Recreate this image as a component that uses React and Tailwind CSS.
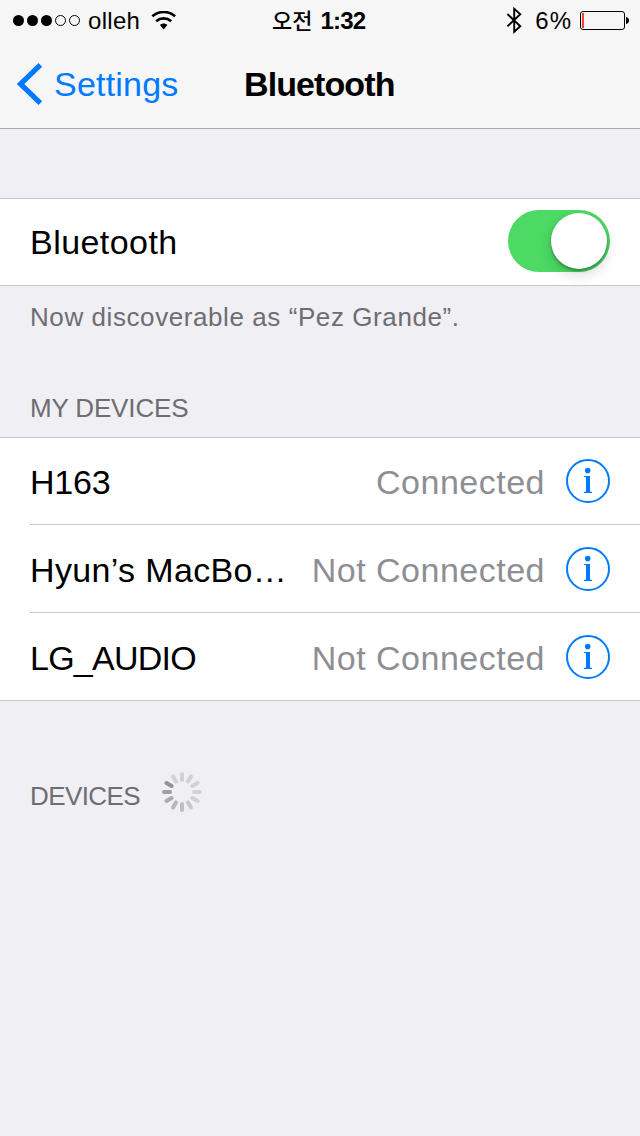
import clsx from "clsx";

const devices = [
  { name: "H163", status: "Connected", tracking: "tracking-[-0.2px]" },
  { name: "Hyun’s MacBo…", status: "Not Connected", tracking: "tracking-[0.35px]" },
  { name: "LG_AUDIO", status: "Not Connected", tracking: "tracking-[-0.75px]" },
];

// clockwise from 12 o'clock
const spinnerBlades = [
  "#d2d2d6", "#d2d2d6", "#d2d2d6", "#d2d2d6", "#d2d2d6", "#c8c8cc",
  "#bebec2", "#b6b6ba", "#acacb0", "#a0a0a4", "#929297", "#d2d2d6",
];

function SignalDots() {
  return (
    <svg width="70" height="12" viewBox="0 0 70 12" className="shrink-0">
      {[0, 1, 2, 3, 4].map((i) => (
        <circle key={i} cx={6.5 + i * 14} cy="6.5" r={i < 3 ? 5.5 : 5} fill={i < 3 ? "#000" : "none"} stroke={i < 3 ? "none" : "#000"} />
      ))}
    </svg>
  );
}

function WifiIcon() {
  return (
    <svg width="26" height="19" viewBox="0 0 26 19" className="ml-[11px] shrink-0">
      <g fill="none" stroke="#000" strokeWidth="2.7">
        <path d="M1.3 5.2C8 -.4 17.4 -.4 24.1 5.2" />
        <path d="M5.2 10.2C9.6 6.5 15.8 6.5 20.2 10.2" />
      </g>
      <path d="M9 14C11.2 12 14.2 12 16.4 14L12.7 18.4Z" />
    </svg>
  );
}

function BluetoothIcon() {
  return (
    <svg width="16" height="28" viewBox="0 0 16 28" className="shrink-0" fill="none" stroke="#000" strokeWidth="1.9">
      <path d="M1.4 8L14.3 20.2L8.2 25.8V2.8L14.3 8.2L1.4 20.4" />
    </svg>
  );
}

function BatteryIcon() {
  return (
    <svg width="50" height="20" viewBox="0 0 50 20" className="shrink-0">
      <rect x=".5" y=".5" width="44" height="18" rx="2.5" fill="none" stroke="#000" />
      <rect x="2" y="2" width="2" height="15" fill="#ff3b30" />
      <path d="M46 6C48.2 6.4 49 7.8 49 9.5C49 11.2 48.2 12.6 46 13Z" />
    </svg>
  );
}

function InfoIcon() {
  return (
    <svg width="44" height="44" viewBox="0 0 44 44" className="shrink-0">
      <circle cx="22" cy="22" r="21" fill="none" stroke="#007aff" strokeWidth="2" />
      <circle cx="21.7" cy="11.6" r="2.8" fill="#007aff" />
      <path d="M17.8 17H24V32.6L26 33V34H17.8V33L20 32.6V18.3L17.8 18Z" fill="#007aff" />
    </svg>
  );
}

function Spinner() {
  return (
    <svg width="40" height="40" viewBox="0 0 40 40" className="shrink-0">
      {spinnerBlades.map((color, i) => (
        <rect key={i} x="18" y="0" width="4" height="10" rx="2" fill={color} transform={`rotate(${i * 30} 20 20)`} />
      ))}
    </svg>
  );
}

function StatusBar() {
  return (
    <div className="grid h-10 grid-cols-[260px_1fr_auto] items-center pl-3 pr-[10px] text-[24px] leading-10">
      <div className="flex h-10 items-center">
        <SignalDots />
        <span className="ml-1.5 mt-0.5 tracking-[0.3px]">olleh</span>
        <WifiIcon />
      </div>
      <div className="flex h-10 items-center">
        <span className="-mt-0.5 font-['Noto_Sans_CJK_KR',sans-serif] text-[22px] font-medium">오전</span>
        <span className="ml-2 mt-0.5 font-bold tracking-[-0.8px]">1:32</span>
      </div>
      <div className="flex h-10 items-center">
        <BluetoothIcon />
        <span className="ml-[13px] mt-0.5 tracking-[1px]">6%</span>
        <span className="ml-2 mt-0.5"><BatteryIcon /></span>
      </div>
    </div>
  );
}

function NavBar() {
  return (
    <div className="grid h-[88px] grid-cols-[228px_1fr] items-center pl-4">
      <button className="flex items-center text-[#007aff] tracking-[0.2px]">
        <svg width="27" height="44" viewBox="0 0 27 44" className="shrink-0" fill="currentColor">
          <path d="M22.5 1L26.2 4.7L8.3 22L26.2 39.3L22.5 43L.8 22Z" />
        </svg>
        <span className="ml-[11px]">Settings</span>
      </button>
      <h1 className="font-bold tracking-[-0.9px]">Bluetooth</h1>
    </div>
  );
}

export default function App() {
  return (
    <div className="h-[1136px] w-[640px] overflow-hidden bg-[#efeff4] font-['Liberation_Sans','Noto_Sans_CJK_KR',sans-serif] text-[34px] leading-[40px] text-black">
      <header className="h-[129px] border-b border-[#a7a7aa] bg-[#f6f6f6]">
        <StatusBar />
        <NavBar />
      </header>

      <section className="mt-[69px] flex h-[88px] items-center justify-between border-y border-[#c8c7cc] bg-white pl-[30px] pr-[30px]">
        <span className="tracking-[0.45px]">Bluetooth</span>
        <div className="-mt-0.5 flex h-[62px] w-[102px] items-center justify-end rounded-full bg-[#4cd964] pr-[3px]">
          <div className="size-14 rounded-full bg-white shadow-[0_6px_14px_rgba(0,0,0,0.15),0_2px_3px_rgba(0,0,0,0.3)]" />
        </div>
      </section>
      <p className="mt-[11px] pl-[30px] text-[26px] tracking-[0.58px] text-[#6d6d72]">Now discoverable as “Pez Grande”.</p>

      <h2 className="mt-[51px] pl-[30px] text-[26px] tracking-[-0.15px] text-[#6d6d72]">MY DEVICES</h2>
      <ul className="mt-[9px] border-y border-[#c8c7cc] bg-white pl-[30px]">
        {devices.map((device, i) => (
          <li key={device.name} className={clsx("flex items-center pr-[30px]", i === 0 ? "h-[86px]" : "h-[88px] border-t border-[#c8c7cc]")}>
            <span className={clsx("mt-0.5 grow whitespace-nowrap", device.tracking)}>{device.name}</span>
            <span className="mr-[21px] mt-0.5 whitespace-nowrap tracking-[0.5px] text-[#8e8e93]">{device.status}</span>
            <InfoIcon />
          </li>
        ))}
      </ul>

      <div className="mt-[71px] flex items-start pl-[30px] text-[#6d6d72]">
        <h2 className="mt-1 w-[132px] text-[26px] tracking-[-0.6px]">DEVICES</h2>
        <Spinner />
      </div>
    </div>
  );
}
